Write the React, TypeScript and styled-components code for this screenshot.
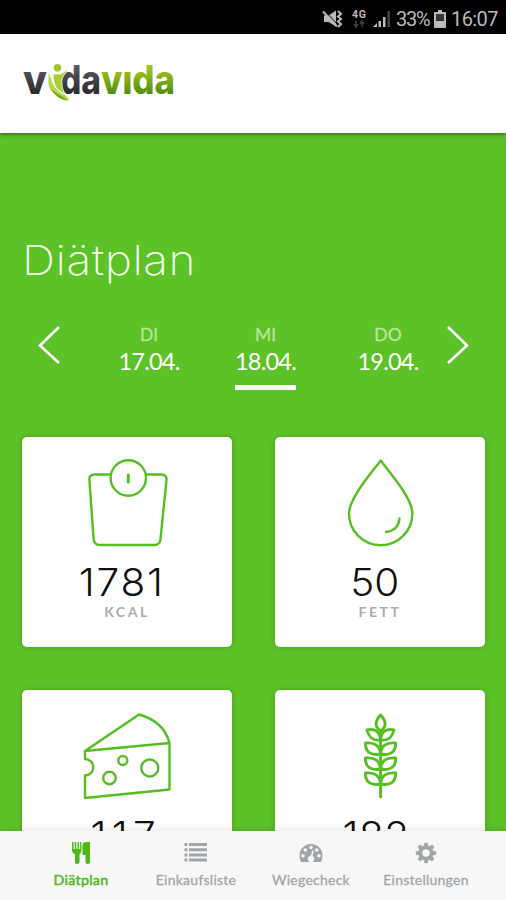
import React from "react";
import styled, { createGlobalStyle, css } from "styled-components";

const GREEN = "#5dc128";
const STROKE = "#55bf22";

const GlobalStyle = createGlobalStyle`
  * { box-sizing: border-box; }
  html, body { margin: 0; padding: 0; background: ${GREEN}; }
  body { font-family: Lato, "Liberation Sans", sans-serif; }
  svg { display: block; overflow: visible; }
`;

const Screen = styled.div`
  width: 506px;
  height: 900px;
  overflow: hidden;
  display: flex;
  flex-direction: column;
  background: ${GREEN};
`;

const StatusBar = styled.div`
  flex: none;
  height: 34px;
  background: #000;
  color: #b9b9b9;
  display: flex;
  align-items: center;
  justify-content: flex-end;
  padding: 3px 8px 0 0;
  font: 400 20px/30px Roboto, sans-serif;
`;

const StatusItem = styled.span<{ $width: number; $gap: number; $spacing?: number }>`
  width: ${(p) => p.$width}px;
  margin-left: ${(p) => p.$gap}px;
  letter-spacing: ${(p) => p.$spacing ?? 0}px;
  white-space: nowrap;
`;

const Header = styled.header`
  flex: none;
  height: 99px;
  background: #fff;
  padding: 24px 0 0 18px;
  z-index: 1;
  box-shadow: 0 1px 4px rgba(20, 60, 0, 0.75);
`;

const Main = styled.main`
  flex: 1;
  min-height: 0;
  overflow: hidden;
`;

const Title = styled.h1`
  margin: 101px 0 0 22px;
  width: 200px;
  height: 52px;
  font: 250 41px/52px Inter, sans-serif;
  letter-spacing: 0.5px;
  color: #f4ffe9;
  transform: scaleX(1.122);
  transform-origin: 0 0;
`;

const DayPicker = styled.div`
  display: grid;
  grid-template-columns: 22px 175px 61px 150px 22px;
  justify-content: start;
  margin: 39px 0 0 38px;
  height: 66px;
`;

const ArrowButton = styled.button`
  appearance: none;
  border: 0;
  padding: 0;
  margin-top: 1px;
  width: 22px;
  height: 38px;
  background: none;
`;

const Day = styled.div<{ $shift?: number; $active?: boolean }>`
  width: 61px;
  height: 65px;
  justify-self: center;
  margin-left: ${(p) => p.$shift ?? 0}px;
  display: flex;
  flex-direction: column;
  align-items: center;
  border-bottom: 5px solid ${(p) => (p.$active ? "#fff" : "transparent")};
`;

const Weekday = styled.span`
  font-size: 17.5px;
  line-height: 20px;
  color: #b8e69c;
  -webkit-text-stroke: 0.3px currentColor;
`;

const DateText = styled.span`
  font-size: 23.5px;
  line-height: 32px;
  color: #fff;
  white-space: nowrap;
  letter-spacing: -0.75px;
`;

const Cards = styled.div`
  display: grid;
  grid-template-columns: 210px 210px;
  grid-auto-rows: 210px;
  gap: 43px;
  margin: 46px 0 0 22px;
`;

const Card = styled.section`
  background: #fff;
  border-radius: 5px;
  box-shadow: 0 0 5px rgba(40, 110, 0, 0.4);
  display: flex;
  flex-direction: column;
  align-items: center;
  padding-top: 22px;
`;

const Amount = styled.div<{ $spacing: number; $shift?: number }>`
  margin: 14px ${(p) => 12 - p.$spacing - (p.$shift ?? 0)}px 0 0;
  height: 43px;
  font: 300 37.5px/44px Inter, sans-serif;
  color: #111;
  white-space: nowrap;
  letter-spacing: ${(p) => p.$spacing}px;
  transform: scaleX(1.08);
`;

const Unit = styled.div`
  height: 16px;
  font-size: 14px;
  line-height: 16px;
  font-weight: 700;
  letter-spacing: 2.6px;
  color: #a9abad;
`;

const TabBar = styled.nav`
  flex: none;
  z-index: 1;
  height: 69px;
  background: #f7f7f7;
  box-shadow: 0 -2px 7px rgba(0, 0, 0, 0.09);
  display: grid;
  grid-template-columns: repeat(4, 115px);
  padding-left: 23px;
`;

const Tab = styled.a<{ $active?: boolean }>`
  display: flex;
  flex-direction: column;
  align-items: center;
  padding: 10px 0 0 1px;
  gap: 6px;
  font-size: 14px;
  line-height: 18px;
  letter-spacing: 0.25px;
  color: #a2a5a7;
  -webkit-text-stroke: 0.3px currentColor;
  ${(p) =>
    p.$active &&
    css`
      color: #4cba16;
      font-size: 14.3px;
      -webkit-text-stroke-width: 0.5px;
    `}
`;

const Logo = () => (
  <svg width="162" height="50" viewBox="0 0 162 50">
    <defs>
      <linearGradient id="dark" x1="0" y1="0" x2="0" y2="1">
        <stop offset="0.2" stopColor="#5a5a5f" />
        <stop offset="0.8" stopColor="#29292e" />
      </linearGradient>
      <linearGradient id="lime" x1="0" y1="0" x2="0" y2="1">
        <stop offset="0.25" stopColor="#a5c51c" />
        <stop offset="0.8" stopColor="#4d8d0d" />
      </linearGradient>
    </defs>
    <g fontFamily="Inter, sans-serif" fontWeight="800" fontSize="39.500">
      <text x="5" y="36" fill="url(#dark)" textLength="24" lengthAdjust="spacingAndGlyphs">v</text>
      <text x="42" y="36" fill="url(#dark)" textLength="41" lengthAdjust="spacingAndGlyphs">da</text>
      <text x="83" y="36" fill="url(#lime)" textLength="74" lengthAdjust="spacingAndGlyphs">vıda</text>
    </g>
    <circle cx="39.500" cy="9.800" r="3.700" fill="#9cc522" />
    <path d="M29 11c5 6 4 20 17 25 3 2 5 4 6 7-13-3-23-10-22-20 0-5 1-8-1-12Z" fill="#b4d84c" stroke="#fff" strokeWidth=".8" />
    <path d="M35 16h8l7-5c-3 6-7 8-6 15 0 4 1 7 4 10-9-2-13-9-13-20Z" fill="#a8d036" stroke="#fff" strokeWidth=".8" />
    <path d="M34 31c4 5 10 6 16 12-8-2-14-5-16-12Z" fill="#7aa912" />
  </svg>
);

const MuteIcon = () => (
  <svg width="20" height="18" viewBox="0 0 20 18" fill="none" stroke="#b9b9b9">
    <path d="M1 5.500h4.500l7.500-5v16l-7.500-4.500H1Z" fill="#b9b9b9" stroke="none" />
    <path d="m2 1 13 14" stroke="#000" strokeWidth="1" />
    <path d="m0 1.500 14 15" strokeWidth="2" />
    <path d="m15 1 3 3-3 2.500 3 2.500-3 2.500 3 2.500-3 3" strokeWidth="2" />
  </svg>
);

const NetworkIcon = () => (
  <svg width="14" height="18" viewBox="0 0 14 18">
    <text x="0" y="8" fill="#b9b9b9" fontFamily="Roboto, sans-serif" fontWeight="700" fontSize="10.500" textLength="14">4G</text>
    <path d="M4 11v6M2 14l2 3 2-3M10 17v-6M8 14l2-3 2 3" fill="none" stroke="#3b3b3b" strokeWidth="1.600" />
  </svg>
);

const SignalIcon = () => (
  <svg width="17" height="18" viewBox="0 0 17 18" fill="#b9b9b9">
    <path d="M0 17 4 13v4Z" />
    <path d="M5.500 11h2.500v6H5.500ZM10 7h2.500v10H10Z" />
    <path d="M14.500 1H17v16h-2.500Z" fill="#444" />
  </svg>
);

const BatteryIcon = () => (
  <svg width="12" height="18" viewBox="0 0 12 18">
    <path d="M4 0h4v2h3q1 0 1 1v14q0 1-1 1H1q-1 0-1-1V3q0-1 1-1h3Z" fill="#b9b9b9" />
    <path d="M2 4h8v7H2Z" fill="#353535" />
  </svg>
);

const Chevron = ({ d }: { d: string }) => (
  <svg width="22" height="38" viewBox="0 0 22 38">
    <path d={d} fill="none" stroke="#fff" strokeWidth="2.600" />
  </svg>
);

const CardIcon = ({ children }: { children: React.ReactNode }) => (
  <svg width="90" height="88" viewBox="0 0 90 88" fill="none" stroke={STROKE} strokeWidth="2.400" strokeLinecap="round" strokeLinejoin="round">
    {children}
  </svg>
);

const ScaleIcon = () => (
  <CardIcon>
    <path d="M28 15.500H12.500Q7 15.500 7.400 21L11.600 80Q12 86 18 86H72.500Q78 86 78.500 80L84.500 21Q85 15.500 79 15.500H64" />
    <circle cx="46.300" cy="19" r="17.700" />
    <path d="M46.300 16v7" strokeWidth="3" />
  </CardIcon>
);

const DropIcon = () => (
  <CardIcon>
    <path d="M45.700 1.500C38 12 14 39 14 54.500a31.700 31.700 0 0 0 63.400 0C77.400 39 53.500 12 45.700 1.500Z" />
    <path d="M64.500 59.500q-1 12-13.500 13.500" />
  </CardIcon>
);

const CheeseIcon = () => (
  <CardIcon>
    <path d="M3 39 57 2.500q25 7 30.500 28.500L3 39v8a7.600 7.600 0 0 1 0 16.500V86l84.500-8.500V31" />
    <circle cx="40.800" cy="48.500" r="4.500" />
    <circle cx="27.500" cy="66" r="6.300" />
    <circle cx="67.800" cy="56" r="8.500" />
  </CardIcon>
);

const WheatIcon = () => (
  <CardIcon>
    <g strokeWidth="2.900">
      <path d="M45.600 20v65M45.600 3c-6.500 7-5.500 12 0 16 5.500-4 6.500-9 0-16Z" />
      <path d="M45.600 28C38 29 34 26 32 18c8-2 13 2 13.600 10C53 29 57 26 59 18c-8-2-13 2-13.400 10Z" />
      {[31, 46, 61].map((y) => (
        <path key={y} transform={`translate(0 ${y})`} d="M45.600 11C36 13 30 9 30.500 0 40-1 45 3 45.600 11 55 13 61 9 60.700 0 51-1 46 3 45.600 11Z" />
      ))}
    </g>
  </CardIcon>
);

const CutleryIcon = () => (
  <svg width="24" height="24" viewBox="0 0 24 24" fill="currentColor">
    <path d="M3 1v8q0 3 3 4v8q0 2 2.200 2T10.500 21v-8q2-1 2-4V1h-1.400v7H9.900V1H8.500v7H7.200V1H5.800v7H4.500V1Z" />
    <path d="M21 1v20q0 2-2.200 2t-2.300-2v-7H13.500V4.500Q13.500 1 17 1Z" />
  </svg>
);

const ListIcon = () => (
  <svg width="24" height="24" viewBox="0 0 24 24" fill="currentColor">
    {[2, 7.2, 12.4, 17.6].map((y) => (
      <path key={y} d={`M.5 ${y}h3v3h-3ZM5 ${y}h18v3H5Z`} />
    ))}
  </svg>
);

const DashboardIcon = () => (
  <svg width="24" height="24" viewBox="0 0 24 24" fill="currentColor">
    <path d="M12 3A11.500 11.500 0 0 0 .5 14.500q0 4 1.500 6.500h20q1.500-2.500 1.500-6.500A11.500 11.500 0 0 0 12 3Z" />
    <g fill="#f7f7f7">
      <circle cx="12" cy="6.500" r="1.700" />
      <circle cx="6.300" cy="9" r="1.800" />
      <circle cx="4" cy="14.700" r="1.800" />
      <circle cx="17.700" cy="9" r="1.800" />
      <circle cx="20" cy="14.700" r="1.800" />
      <path d="m13.200 9.500 1.400.3-1 5.200a3.300 3.300 0 1 1-1.500-.4Z" />
    </g>
  </svg>
);

const CogIcon = () => (
  <svg width="24" height="24" viewBox="0 0 24 24" fill="none" stroke="currentColor">
    <circle cx="12" cy="12" r="5.600" strokeWidth="3.800" />
    {[0, 45, 90, 135, 180, 225, 270, 315].map((a) => (
      <path key={a} transform={`rotate(${a} 12 12)`} d="M10 5.500 10.500 2h3l.5 3.500Z" fill="currentColor" strokeWidth=".5" />
    ))}
  </svg>
);

const cards = [
  { icon: <ScaleIcon />, amount: "1781", unit: "KCAL", spacing: 1.7, shift: 0 },
  { icon: <DropIcon />, amount: "50", unit: "FETT", spacing: 0, shift: 1 },
  { icon: <CheeseIcon />, amount: "117", unit: "EIWEISS", spacing: 5, shift: 4 },
  { icon: <WheatIcon />, amount: "182", unit: "KH", spacing: 0.5, shift: 4 },
];

export default function App() {
  return (
    <>
      <GlobalStyle />
      <Screen>
        <StatusBar>
          <MuteIcon />
          <StatusItem $width={14} $gap={9}><NetworkIcon /></StatusItem>
          <StatusItem $width={17} $gap={7}><SignalIcon /></StatusItem>
          <StatusItem $width={34} $gap={6} $spacing={-1.2}>33%</StatusItem>
          <StatusItem $width={12} $gap={4}><BatteryIcon /></StatusItem>
          <StatusItem $width={47} $gap={5} $spacing={-0.6}>16:07</StatusItem>
        </StatusBar>
        <Header><Logo /></Header>
        <Main>
          <Title>Diätplan</Title>
          <DayPicker>
            <ArrowButton aria-label="Zurück"><Chevron d="M21 1 2 19.500 21 37" /></ArrowButton>
            <Day $shift={3}><Weekday>DI</Weekday><DateText>17.04.</DateText></Day>
            <Day $active><Weekday>MI</Weekday><DateText>18.04.</DateText></Day>
            <Day $shift={34}><Weekday>DO</Weekday><DateText>19.04.</DateText></Day>
            <ArrowButton aria-label="Weiter"><Chevron d="M2 1 21 19.500 2 37" /></ArrowButton>
          </DayPicker>
          <Cards>
            {cards.map((c) => (
              <Card key={c.unit}>
                {c.icon}
                <Amount $spacing={c.spacing} $shift={c.shift}>{c.amount}</Amount>
                <Unit>{c.unit}</Unit>
              </Card>
            ))}
          </Cards>
        </Main>
        <TabBar>
          <Tab $active><CutleryIcon />Diätplan</Tab>
          <Tab><ListIcon />Einkaufsliste</Tab>
          <Tab><DashboardIcon />Wiegecheck</Tab>
          <Tab><CogIcon />Einstellungen</Tab>
        </TabBar>
      </Screen>
    </>
  );
}
